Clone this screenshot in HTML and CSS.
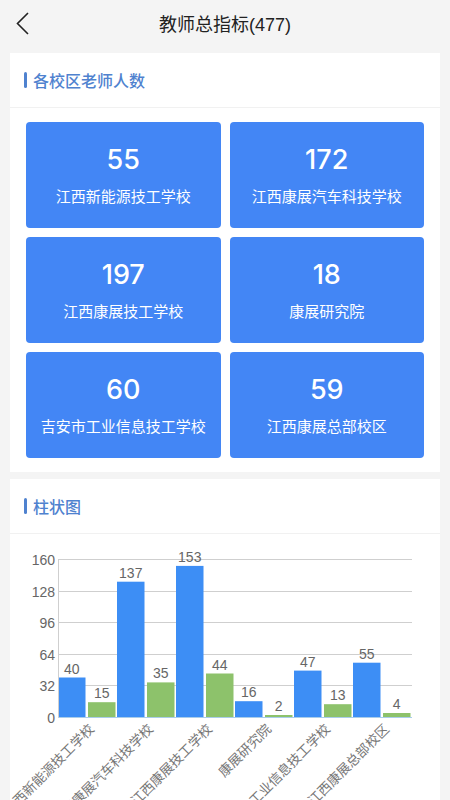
FILE: index.html
```html
<!DOCTYPE html>
<html lang="zh">
<head>
<meta charset="utf-8">
<link rel="stylesheet" href="styles.css">
</head>
<body>
<header class="nav">
  <svg class="back" width="14" height="24" viewBox="0 0 14 24"><polyline points="12,1 1.5,11.5 12,22" fill="none" stroke="#222" stroke-width="1.6"/></svg>
  <div class="nav-title">教师总指标(477)</div>
</header>

<section class="card">
  <div class="card-head"><span class="mark"></span><span class="card-title">各校区老师人数</span></div>
  <div class="tiles">
    <div class="tile"><div class="num">55</div><div class="name">江西新能源技工学校</div></div>
    <div class="tile"><div class="num">172</div><div class="name">江西康展汽车科技学校</div></div>
    <div class="tile"><div class="num">197</div><div class="name">江西康展技工学校</div></div>
    <div class="tile"><div class="num">18</div><div class="name">康展研究院</div></div>
    <div class="tile"><div class="num">60</div><div class="name">吉安市工业信息技工学校</div></div>
    <div class="tile"><div class="num">59</div><div class="name">江西康展总部校区</div></div>
  </div>
</section>

<section class="card card-chart">
  <div class="card-head"><span class="mark"></span><span class="card-title">柱状图</span></div>
  <svg class="chart" width="430" height="270" viewBox="0 0 430 270">
    <g stroke="#cfcfcf" stroke-width="1">
      <line x1="48" y1="25.5" x2="402" y2="25.5"/>
      <line x1="48" y1="57.5" x2="402" y2="57.5"/>
      <line x1="48" y1="88.5" x2="402" y2="88.5"/>
      <line x1="48" y1="120.5" x2="402" y2="120.5"/>
      <line x1="48" y1="151.5" x2="402" y2="151.5"/>
    </g>
    <g class="ylab" text-anchor="end">
      <text x="45" y="30.5">160</text>
      <text x="45" y="62.5">128</text>
      <text x="45" y="93.5">96</text>
      <text x="45" y="125.5">64</text>
      <text x="45" y="156.5">32</text>
      <text x="45" y="188.5">0</text>
    </g>
    <g fill="#3d8ef5">
      <rect x="48" y="143.5" width="27.5" height="39.5"/>
      <rect x="107" y="47.7" width="27.5" height="135.3"/>
      <rect x="166" y="31.9" width="27.5" height="151.1"/>
      <rect x="225" y="167.2" width="27.5" height="15.8"/>
      <rect x="284" y="136.6" width="27.5" height="46.4"/>
      <rect x="343" y="128.7" width="27.5" height="54.3"/>
    </g>
    <g fill="#8dc26b">
      <rect x="78" y="168.2" width="27.5" height="14.8"/>
      <rect x="137" y="148.4" width="27.5" height="34.6"/>
      <rect x="196" y="139.5" width="27.5" height="43.5"/>
      <rect x="255" y="181" width="27.5" height="2"/>
      <rect x="314" y="170.2" width="27.5" height="12.8"/>
      <rect x="373" y="179" width="27.5" height="4"/>
    </g>
    <line x1="48" y1="183.5" x2="402" y2="183.5" stroke="#a9cdea" stroke-width="1"/>
    <line x1="48.5" y1="25" x2="48.5" y2="184" stroke="#cfcfcf" stroke-width="1"/>
    <g class="vlab" text-anchor="middle">
      <text x="61.75" y="139.5">40</text>
      <text x="91.75" y="164.2">15</text>
      <text x="120.75" y="43.7">137</text>
      <text x="150.75" y="144.4">35</text>
      <text x="179.75" y="27.9">153</text>
      <text x="209.75" y="135.5">44</text>
      <text x="238.75" y="163.2">16</text>
      <text x="268.75" y="177">2</text>
      <text x="297.75" y="132.6">47</text>
      <text x="327.75" y="166.2">13</text>
      <text x="356.75" y="124.7">55</text>
      <text x="386.75" y="175">4</text>
    </g>
    <g class="xlab" text-anchor="end">
      <text transform="translate(85,196) rotate(-45)">江西新能源技工学校</text>
      <text transform="translate(144,196) rotate(-45)">江西康展汽车科技学校</text>
      <text transform="translate(203,196) rotate(-45)">江西康展技工学校</text>
      <text transform="translate(262,196) rotate(-45)">康展研究院</text>
      <text transform="translate(321,196) rotate(-45)">吉安市工业信息技工学校</text>
      <text transform="translate(380,196) rotate(-45)">江西康展总部校区</text>
    </g>
  </svg>
</section>
</body>
</html>
```

FILE: styles.css
```css
html, body {
  margin: 0;
  padding: 0;
  background: #f4f4f4;
  font-family: "Liberation Sans", "Noto Sans CJK SC", sans-serif;
  overflow: hidden;
}
.nav {
  height: 46px;
  display: flex;
  align-items: center;
  justify-content: center;
  position: relative;
}
.back {
  position: absolute;
  left: 16px;
  top: 12px;
}
.nav-title {
  font-size: 18px;
  color: #222;
}
.card {
  background: #fff;
  margin: 7px 10px 6px 10px;
}
.card-head {
  height: 54px;
  display: flex;
  align-items: center;
  padding-left: 14px;
  border-bottom: 1px solid #f1f1f1;
}
.mark {
  width: 3px;
  height: 16px;
  border-radius: 2px;
  background: #4f82cf;
  margin-right: 6px;
}
.card-title {
  font-size: 16px;
  font-weight: 500;
  color: #4f82cf;
}
.tiles {
  display: grid;
  grid-template-columns: 1fr 1fr;
  gap: 9px;
  padding: 14px 16px 14px 16px;
}
.tile {
  height: 106px;
  background: #4386f5;
  border-radius: 4px;
  color: #fff;
  display: flex;
  flex-direction: column;
  align-items: center;
}
.num {
  font-family: Inter, "Liberation Sans", sans-serif;
  font-size: 27px;
  font-weight: 500;
  line-height: 32px;
  margin-top: 22px;
}
.name {
  font-size: 15px;
  line-height: 20px;
  margin-top: 11px;
}
.chart {
  display: block;
}
.chart text {
  font-family: "Liberation Sans", "Noto Sans CJK SC", sans-serif;
  fill: #666;
}
.ylab text { font-size: 14px; }
.vlab text { font-size: 14px; }
.xlab text { font-size: 13.5px; fill: #777; }
```
